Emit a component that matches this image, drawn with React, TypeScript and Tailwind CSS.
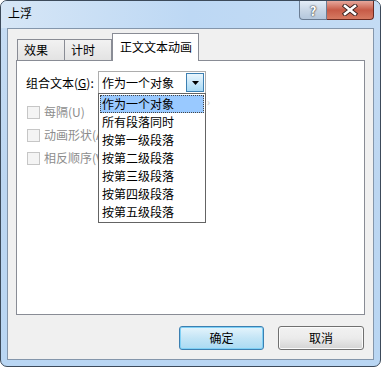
import React from "react";

const font = { fontFamily: '"Noto Sans CJK SC", "Noto Sans", sans-serif' };

function Checkbox({ label }: { label: string }) {
  return (
    <div className="flex items-center h-[14px]">
      <div className="w-[13px] h-[13px] border border-[#c6c6c6] bg-[#f4f4f4]" />
      <span className="ml-[4px] text-[12px] leading-none text-[#8d8d8d] whitespace-nowrap">{label}</span>
    </div>
  );
}

const items = ["作为一个对象", "所有段落同时", "按第一级段落", "按第二级段落", "按第三级段落", "按第四级段落", "按第五级段落"];

export default function App() {
  return (
    <div className="w-[381px] h-[367px] bg-white" style={font}>
      <div className="relative w-[381px] h-[367px] rounded-[7px] border border-[#3c4a5a] bg-gradient-to-b from-[#c7ddf4] via-[#bcd6f1] to-[#b9d6f3] overflow-hidden flex flex-col">
        {/* title bar */}
        <div className="h-[27px] flex items-start shrink-0 bg-gradient-to-r from-[#d6e6f6] via-[#bdd8f4] to-[#c4dcf4]">
          <span className="ml-[7px] mt-[6px] text-[12px] leading-none text-black">上浮</span>
          <div className="ml-auto mr-[6px] flex">
            <div className="w-[28px] h-[19px] rounded-bl-[4px] border border-[#6b7d93] border-t-0 bg-gradient-to-b from-[#e4edf7] via-[#c9d7e6] to-[#b4c7dc] flex items-center justify-center text-white text-[13px] font-bold leading-none" style={{ textShadow: "0 0 2px #333, 0 0 1px #333" }}>?</div>
            <div className="w-[47px] h-[19px] rounded-br-[4px] border border-[#6b2a20] border-t-0 border-l-0 bg-gradient-to-b from-[#e6a79c] via-[#c75b47] to-[#d67a62] flex items-center justify-center">
              <svg width="16" height="12" viewBox="0 0 16 12">
                <path d="M3 2 L13 10 M13 2 L3 10" stroke="#3b2320" strokeWidth="4.4" strokeLinecap="square" />
                <path d="M3 2 L13 10 M13 2 L3 10" stroke="#fff" strokeWidth="2.6" strokeLinecap="square" />
              </svg>
            </div>
          </div>
        </div>
        {/* client */}
        <div className="mx-[6px] mb-[6px] flex-1 border border-[#8496ab] bg-[#f0f0f0] flex flex-col px-[8px] pt-[3px]">
          {/* tabs */}
          <div className="flex items-end h-[28px] ml-[1px] relative z-10">
            <div className="w-[48px] h-[21px] border border-[#898c95] border-b-0 bg-gradient-to-b from-[#f2f2f2] to-[#e3e3e3] text-[12px] leading-none flex items-center pl-[6px]">效果</div>
            <div className="w-[47px] h-[21px] border border-[#898c95] border-b-0 border-l-0 bg-gradient-to-b from-[#f2f2f2] to-[#e3e3e3] text-[12px] leading-none flex items-center pl-[6px]">计时</div>
            <div className="w-[87px] h-[28px] -mb-[1px] border border-[#898c95] border-b-0 bg-white text-[12px] leading-none flex items-start pt-[7px] pl-[7px]">正文文本动画</div>
          </div>
          {/* panel */}
          <div className="h-[255px] border border-[#898c95] bg-white relative">
            <div className="flex items-center mt-[10px] ml-[9px]">
              <span className="text-[12px] leading-none text-black w-[72px]">组合文本(<span className="underline">G</span>):</span>
              <div className="w-[108px] h-[23px] border border-[#adadad] bg-white flex items-center pl-[3px] pr-[1px]">
                <span className="text-[12px] leading-none flex-1">作为一个对象</span>
                <div className="w-[18px] h-[19px] border border-[#3c7fb1] bg-gradient-to-b from-[#eaf6fd] to-[#a7d9f5] flex items-center justify-center">
                  <svg width="7" height="4" viewBox="0 0 7 4"><path d="M0 0 H7 L3.5 4 Z" fill="#000" /></svg>
                </div>
              </div>
            </div>
            <div className="flex flex-col gap-[9px] ml-[10px] mt-[11px]">
              <Checkbox label="每隔(U)" />
              <Checkbox label="动画形状(A)" />
              <Checkbox label="相反顺序(V)" />
            </div>
            {/* dropdown list */}
            <div className="absolute left-[81px] top-[32px] w-[108px] border border-[#646464] bg-white flex flex-col py-[1px]">
              {items.map((t, i) => (
                <div
                  key={t}
                  className={
                    i === 0
                      ? "h-[18px] mx-[1px] bg-[#99c9ff] border border-dotted border-[#444] flex items-center pl-[1px] text-[12px] leading-none"
                      : "h-[18px] mx-[1px] flex items-center pl-[2px] text-[12px] leading-none"
                  }
                >
                  {t}
                </div>
              ))}
            </div>
            <span className="absolute left-[190px] top-[36px] text-[10px] leading-none text-[#c8c8c8]">›</span>
          </div>
          {/* buttons */}
          <div className="flex justify-end gap-[14px] mt-[11px] mr-[1px]">
            <div className="w-[85px] h-[24px] rounded-[3px] border border-[#3c7fb1] bg-gradient-to-b from-[#e5f4fc] via-[#c4e5f6] to-[#a9daf3] flex items-center justify-center text-[12px] leading-none shadow-[inset_0_0_0_1px_#7fd0f5]">确定</div>
            <div className="w-[86px] h-[24px] rounded-[3px] border border-[#707070] bg-gradient-to-b from-[#f2f2f2] via-[#ebebeb] to-[#d4d4d4] flex items-center justify-center text-[12px] leading-none shadow-[inset_0_0_0_1px_#fbfbfb]">取消</div>
          </div>
        </div>
      </div>
    </div>
  );
}
